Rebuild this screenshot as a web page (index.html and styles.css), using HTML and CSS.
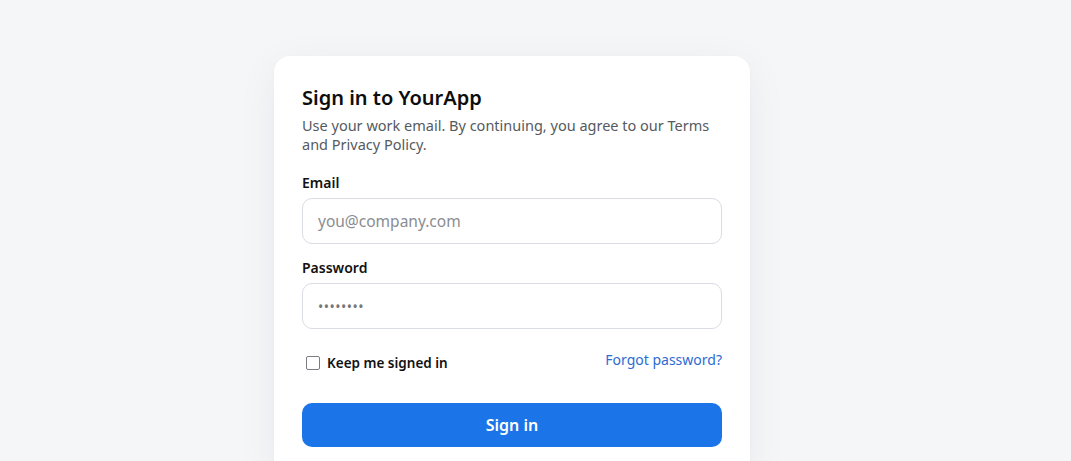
FILE: index.html
```html
<!DOCTYPE html>
<html lang="en">
<head>
<meta charset="utf-8">
<title>Sign in</title>
<link rel="stylesheet" href="styles.css">
</head>
<body>
<div class="page">
  <form class="card">
    <h1 class="title">Sign in to YourApp</h1>
    <p class="subtitle">Use your work email. By continuing, you agree to our Terms and Privacy Policy.</p>
    <label class="field">
      <span class="label">Email</span>
      <input class="input" type="email" placeholder="you@company.com">
    </label>
    <label class="field">
      <span class="label">Password</span>
      <input class="input pw" type="password" value="password">
    </label>
    <div class="row">
      <label class="check"><span class="box"></span><span>Keep me signed in</span></label>
      <a class="link" href="#">Forgot password?</a>
    </div>
    <button class="btn" type="button">Sign in</button>
  </form>
</div>
</body>
</html>
```
FILE: styles.css
```css
* { box-sizing: border-box; }
html, body { margin: 0; height: 100%; }
body {
  background: #f5f6f8;
  font-family: "Noto Sans", "Open Sans", sans-serif;
  color: #111;
}
.page {
  padding: 56px 0 0 274px;
}
.card {
  width: 476px;
  background: #fff;
  border-radius: 16px;
  padding: 28px 28px 28px;
  box-shadow: 0 10px 40px rgba(20, 30, 50, 0.06), 0 1px 3px rgba(20, 30, 50, 0.03);
  display: flex;
  flex-direction: column;
}
.title {
  margin: 0;
  font-size: 20px;
  font-weight: 600;
  line-height: 28px;
  color: #0d0d0d;
}
.subtitle {
  margin: 4px 0 0;
  font-size: 14.5px;
  line-height: 19px;
  color: #555a60;
}
.field {
  display: flex;
  flex-direction: column;
  margin-top: 19px;
}
.field + .field { margin-top: 14px; }
.label {
  font-size: 14px;
  font-weight: 600;
  line-height: 20px;
  color: #111;
  margin-bottom: 5px;
}
.input {
  height: 46px;
  border: 1px solid #dadde4;
  border-radius: 10px;
  padding: 0 15px;
  font: inherit;
  font-size: 15.5px;
  color: #333;
  outline: none;
  background: #fff;
}
.input::placeholder { color: #8a8d92; }
.pw { color: #777; font-size: 14px; letter-spacing: 0.5px; }
.row {
  display: flex;
  justify-content: space-between;
  align-items: flex-start;
  margin-top: 22px;
}
.check {
  display: flex;
  align-items: center;
  gap: 7px;
  font-size: 13.5px;
  font-weight: 600;
  margin-top: 3px;
  padding-left: 4px;
}
.box {
  width: 14px;
  height: 14px;
  border: 1.6px solid #7b7d85;
  border-radius: 2px;
  background: #fff;
}
.link {
  font-size: 14px;
  color: #2d6bd4;
  text-decoration: none;
  line-height: 18px;
}
.btn {
  margin-top: 31px;
  height: 44px;
  border: none;
  border-radius: 10px;
  background: #1b74e8;
  color: #fff;
  font: inherit;
  font-size: 16px;
  font-weight: 600;
}
```
